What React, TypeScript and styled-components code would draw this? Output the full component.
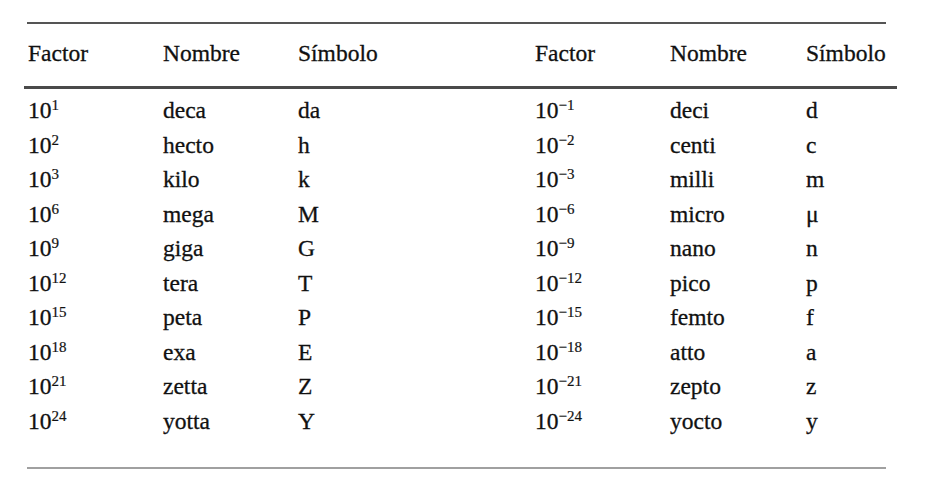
import React from "react";
import styled, { createGlobalStyle } from "styled-components";

const Global = createGlobalStyle`
  html, body {
    margin: 0;
    padding: 0;
    background: #ffffff;
  }
  body {
    font-family: "Liberation Serif", "Times New Roman", serif;
    color: #111111;
  }
`;

const Page = styled.div`
  width: 934px;
  height: 479px;
  padding-top: 22px;
  box-sizing: border-box;
  display: flex;
  flex-direction: column;
  overflow: hidden;
`;

const Rule = styled.div<{ $left: number; $width: number; $h: number; $color: string }>`
  margin-left: ${(p) => p.$left}px;
  width: ${(p) => p.$width}px;
  height: ${(p) => p.$h}px;
  background: ${(p) => p.$color};
  flex: none;
`;

const Row = styled.div<{ $head?: boolean }>`
  display: grid;
  grid-template-columns: 135px 135px 237px 135px 136px 1fr;
  padding-left: 28px;
  font-size: 23.5px;
  line-height: ${(p) => (p.$head ? "26px" : "34.5px")};
  ${(p) => (p.$head ? "padding-top: 16px; padding-bottom: 20px;" : "")}
  white-space: nowrap;
  -webkit-text-stroke: 0.3px #111111;
`;

const Body = styled.div`
  padding-top: 4px;
  padding-bottom: 29px;
`;

const Cell = styled.span``;

const Exp = styled.sup`
  font-size: 15px;
  line-height: 0;
  vertical-align: 8px;
  -webkit-text-stroke: 0.2px #111111;
`;

const headers = ["Factor", "Nombre", "Símbolo", "Factor", "Nombre", "Símbolo"];

const rows: [string, string, string, string, string, string][] = [
  ["1", "deca", "da", "−1", "deci", "d"],
  ["2", "hecto", "h", "−2", "centi", "c"],
  ["3", "kilo", "k", "−3", "milli", "m"],
  ["6", "mega", "M", "−6", "micro", "μ"],
  ["9", "giga", "G", "−9", "nano", "n"],
  ["12", "tera", "T", "−12", "pico", "p"],
  ["15", "peta", "P", "−15", "femto", "f"],
  ["18", "exa", "E", "−18", "atto", "a"],
  ["21", "zetta", "Z", "−21", "zepto", "z"],
  ["24", "yotta", "Y", "−24", "yocto", "y"],
];

const Power = ({ e }: { e: string }) => (
  <Cell>
    10<Exp>{e}</Exp>
  </Cell>
);

export default function App() {
  return (
    <>
      <Global />
      <Page>
        <Rule $left={27} $width={859} $h={2} $color="#555555" />
        <Row $head>
          {headers.map((h, i) => (
            <Cell key={i}>{h}</Cell>
          ))}
        </Row>
        <Rule $left={24} $width={873} $h={3} $color="#4a4a4a" />
        <Body>
          {rows.map((r, i) => (
            <Row key={i}>
              <Power e={r[0]} />
              <Cell>{r[1]}</Cell>
              <Cell>{r[2]}</Cell>
              <Power e={r[3]} />
              <Cell>{r[4]}</Cell>
              <Cell>{r[5]}</Cell>
            </Row>
          ))}
        </Body>
        <Rule $left={27} $width={859} $h={2} $color="#a0a0a0" />
      </Page>
    </>
  );
}
